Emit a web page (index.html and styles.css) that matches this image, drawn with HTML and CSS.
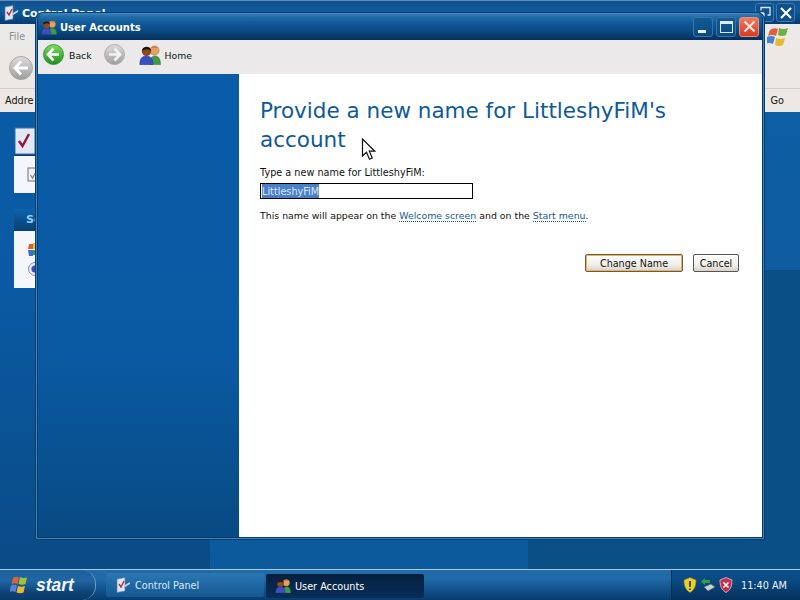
FILE: index.html
```html
<!DOCTYPE html>
<html lang="en">
<head>
<meta charset="utf-8">
<title>User Accounts</title>
<link rel="stylesheet" href="styles.css">
</head>
<body>
<svg class="defs" width="0" height="0" aria-hidden="true">
  <defs>
    <linearGradient id="gGreen" x1="0" y1="0" x2="0" y2="1"><stop offset="0" stop-color="#7fdc5a"/><stop offset="1" stop-color="#1c8f1c"/></linearGradient>
    <linearGradient id="gGrey" x1="0" y1="0" x2="0" y2="1"><stop offset="0" stop-color="#dcdcdc"/><stop offset="1" stop-color="#9e9e9e"/></linearGradient>
    <symbol id="users" viewBox="0 0 22 20">
      <path d="M11 19.500c0-5 1-8.500 5-8.500s5.500 3.500 5.500 8.500z" fill="#3f9a4a" stroke="#2c6e36" stroke-width=".5"/>
      <circle cx="15.500" cy="5.500" r="4.600" fill="#e8a060" stroke="#a06a3a" stroke-width=".5"/>
      <path d="M12 3q3.500-3.500 7 0z" fill="#c8824a"/>
      <path d="M.8 19.700c0-6 2.200-8.700 6.400-8.700s6.800 2.700 6.800 8.700z" fill="#3b4fc0" stroke="#26348a" stroke-width=".5"/>
      <circle cx="7.500" cy="6.500" r="4.600" fill="#8a4a24"/>
      <path d="M2.900 6.500a4.600 4.600 0 0 1 9.200-.5q-3-2.500-6-1.500t-3.200 2z" fill="#22130c"/>
    </symbol>
    <symbol id="cpanel" viewBox="0 0 16 16">
      <path d="M2 2l8-1.500V14l-8 1.500z" fill="#dfe8f4" stroke="#5a7fae" stroke-width=".7"/>
      <path d="M4 7l2 3 3-6" fill="none" stroke="#b03040" stroke-width="1.400"/>
      <path d="M10 8l5-3v2l-5 3z" fill="#cfd8e4"/>
    </symbol>
  </defs>
</svg>
<div class="screen">
  <main class="desktop">
    <section class="backwin">
      <header class="backtitle">
        <svg class="ico16"><use href="#cpanel"/></svg>
        <span class="backtitle-text">Control Panel</span>
        <span class="backbtns">
          <span class="backbtn"><svg width="14" height="14" viewBox="0 0 14 14"><path d="M3 4.500V1.500H12V9h-2.500M1 12L6 7M6 7H2.500M6 7v3.500" fill="none" stroke="#dceaf8" stroke-width="1.300"/></svg></span>
          <span class="backbtn"><svg width="12" height="12" viewBox="0 0 12 12"><path d="M1 1l10 10M11 1L1 11" stroke="#fff" stroke-width="2.200"/></svg></span>
        </span>
      </header>
      <nav class="backmenu">
        <span>File</span>
        <svg class="xplogo" width="24" height="22" viewBox="0 0 24 22"><path d="M3 5q4-3 8-1l-2 7q-4-2-8 0z" fill="#e0603a"/><path d="M12 3q4 2 9 0l-2 7q-4 2-8 0z" fill="#6fb040"/><path d="M0 12q4-2 8 0l-2 7q-4-2-8 0z" fill="#4a80d0"/><path d="M9 13q4 2 9 0l-2 7q-4 2-8 0z" fill="#e8b830"/></svg>
      </nav>
      <div class="backtools">
        <svg width="26" height="26" viewBox="0 0 26 26"><circle cx="13" cy="13" r="11.500" fill="url(#gGrey)" stroke="#a8a8a8"/><path d="M13 6.500L7 13l6 6.500M7.500 13H20" fill="none" stroke="#fff" stroke-width="2.800"/></svg>
      </div>
      <div class="backaddr"><span>Addre</span><span class="go">Go</span></div>
      <div class="backbody">
        <aside class="tasks">
          <div class="taskhead taskhead-first">
            <svg class="taskicon" width="22" height="28" viewBox="0 0 22 28"><rect x="1" y="1" width="20" height="26" fill="#dfe8f4" stroke="#3a6aa8"/><path d="M5 14l3.500 5L15 7" fill="none" stroke="#a01030" stroke-width="2.400"/></svg>
          </div>
          <div class="taskbox taskbox-a"><svg width="13" height="15" viewBox="0 0 13 15"><rect x="1" y="1" width="11" height="13" fill="#eef0f4" stroke="#6a7484"/><path d="M3.500 8l2 3 3.500-6" fill="none" stroke="#8a7a60" stroke-width="1.200"/></svg></div>
          <div class="taskhead taskhead-second"><span>Se</span></div>
          <div class="taskbox taskbox-b">
            <svg width="13" height="15" viewBox="0 0 13 15"><path d="M2 2h4v5H1z" fill="#e05a30"/><path d="M6 1h6v6H6z" fill="#e8c030"/><path d="M1 8h5v6H2z" fill="#3a70c8"/><path d="M6 8h6v5H6z" fill="#3aa040"/></svg>
            <svg width="13" height="15" viewBox="0 0 13 15"><circle cx="8" cy="8" r="6.500" fill="#e4e8f4" stroke="#8890b8"/><circle cx="8" cy="8" r="3.600" fill="#3a50b0"/></svg>
          </div>
        </aside>
      </div>
    </section>

    <section class="win">
      <header class="titlebar">
        <svg class="ico18"><use href="#users"/></svg>
        <h1 class="title">User Accounts</h1>
        <div class="capbtns">
          <span class="capbtn"><i class="glyph-min"></i></span>
          <span class="capbtn"><i class="glyph-max"></i></span>
          <span class="capbtn capbtn-close"><svg width="13" height="13" viewBox="0 0 13 13"><path d="M1.500 1.500l10 10M11.500 1.500l-10 10" stroke="#fbe6dd" stroke-width="2.200"/></svg></span>
        </div>
      </header>
      <div class="toolbar">
        <span class="tool">
          <svg width="21" height="21" viewBox="0 0 21 21"><circle cx="10.500" cy="10.500" r="10" fill="url(#gGreen)" stroke="#2d8a2d" stroke-width=".8"/><path d="M10.500 4.500L5 10.500l5.500 6M5.500 10.500H16" fill="none" stroke="#fff" stroke-width="2.600"/></svg>
          <span class="toollabel">Back</span>
        </span>
        <span class="tool tool-next">
          <svg width="21" height="21" viewBox="0 0 21 21"><circle cx="10.500" cy="10.500" r="10" fill="url(#gGrey)" stroke="#a4a4a4" stroke-width=".8"/><path d="M10.500 4.500L16 10.500l-5.500 6M15.500 10.500H5" fill="none" stroke="#f2f2f2" stroke-width="2.600"/></svg>
        </span>
        <span class="tool tool-home">
          <svg class="ico-home"><use href="#users"/></svg>
          <span class="toollabel">Home</span>
        </span>
      </div>
      <div class="panes">
        <aside class="side"></aside>
        <article class="content">
          <h2 class="heading">Provide a new name for LittleshyFiM's account</h2>
          <label class="fieldlabel" for="nm">Type a new name for LittleshyFiM:</label>
          <div class="field" id="nm"><span class="sel">LittleshyFiM</span></div>
          <p class="note">This name will appear on the <a class="lnk">Welcome screen</a> and on the <a class="lnk">Start menu</a>.</p>
          <div class="actions">
            <button class="btn btn-default" type="button">Change Name</button>
            <button class="btn btn-cancel" type="button">Cancel</button>
          </div>
        </article>
      </div>
    </section>

    <svg class="cursor" width="15" height="23" viewBox="0 0 15 23"><path d="M1.500 1v17l4-3.800 3 7 2.800-1.200-3-6.800h5.500z" fill="#fff" stroke="#111" stroke-width="1.200"/></svg>
  </main>

  <footer class="taskbar">
    <button class="start" type="button">
      <svg width="20" height="19" viewBox="0 0 20 19"><path d="M3 2q3-2 6-.5L7.500 8q-3-1.500-6 0z" fill="#e0603a"/><path d="M10 1q3 1.500 7 .5L15.500 8q-3 1.500-7 0z" fill="#9cc040"/><path d="M1 9.500q3-1.500 6 0L5.500 16q-3-1.500-6 0z" fill="#5a80d0"/><path d="M8 10q3 1.500 7 0L13.500 16.500q-3 1.500-7 0z" fill="#eab830"/></svg>
      <span>start</span>
    </button>
    <div class="tasklist">
      <span class="taskbtn"><svg class="ico16"><use href="#cpanel"/></svg>Control Panel</span>
      <span class="taskbtn taskbtn-active"><svg class="ico16"><use href="#users"/></svg>User Accounts</span>
    </div>
    <div class="tray">
      <svg width="14" height="16" viewBox="0 0 14 16"><path d="M7 .5l6 2.500c0 6-1.500 10-6 12.500C2.500 13 1 9 1 3z" fill="#e8cf30" stroke="#8a7a20" stroke-width=".6"/><path d="M7 4v6M7 11.500v1.500" stroke="#222" stroke-width="1.500"/></svg>
      <svg width="16" height="16" viewBox="0 0 16 16"><path d="M5 1l-4 3.500L5 8V6h5V3H5z" fill="#30a040"/><path d="M4 10l7-3 4 3-7 4z" fill="#c8d0d8" stroke="#55606a" stroke-width=".6"/></svg>
      <svg width="14" height="16" viewBox="0 0 14 16"><path d="M7 .5l6 2.500c0 6-1.500 10-6 12.500C2.500 13 1 9 1 3z" fill="#c03050" stroke="#e6c0c8" stroke-width=".8"/><path d="M4.500 5.500l5 5M9.500 5.500l-5 5" stroke="#fff" stroke-width="1.500"/></svg>
      <time class="clock">11:40 AM</time>
    </div>
  </footer>
</div>
</body>
</html>
```
FILE: styles.css
```css
* { box-sizing: border-box; }
html, body { margin: 0; padding: 0; }
body { font-family: "DejaVu Sans", Verdana, sans-serif; font-size: 9.700px; color: #111; }
.defs { position: absolute; }
.screen { width: 800px; height: 600px; display: flex; flex-direction: column; overflow: hidden; }
.ico16 { width: 16px; height: 16px; flex: none; }
.ico18 { width: 16px; height: 15px; flex: none; }

.desktop {
  position: relative; flex: 1; min-height: 0;
  background:
    linear-gradient(180deg, #0a5ba6 0 112px, #0a5aa3 288px, #0a4b86 100%) left / 210px 100% no-repeat,
    linear-gradient(90deg, #0c5a9b 0 528px, #0a4f85 528px 800px);
}

/* Control Panel behind */
.backwin { position: absolute; left: 0; top: 0; width: 800px; height: 270px; display: flex; flex-direction: column; }
.backtitle { height: 24px; flex: none; display: flex; align-items: center; gap: 3px; padding: 0 5px 0 3px; color: #fff; font-weight: bold; font-size: 11px;
  background: linear-gradient(180deg, #14508a 0, #0f5b9c 40%, #073d72 100%); border-top: 1px solid #5a8fc0; }
.backtitle-text { flex: 1; padding-top: 2px; }
.backbtns { display: flex; gap: 2px; }
.backbtn { width: 19px; height: 19px; display: flex; align-items: center; justify-content: center; border: 1px solid #3d78ae; border-radius: 3px; background: #0f4f8c; }
.backmenu { height: 24px; flex: none; display: flex; align-items: center; justify-content: space-between; padding: 0 9px; background: #ece9e9; color: #8d8d8d; }
.backtools { height: 40px; flex: none; display: flex; align-items: center; padding-left: 8px; background: #ece9e4; }
.backaddr { height: 24px; flex: none; display: flex; align-items: center; justify-content: space-between; padding: 0 16px 0 5px; background: #ece9e4; border-top: 1px solid #cfcdc6; }
.backbody { flex: 1; min-height: 0; padding: 15px 0 0 14px;
  background: linear-gradient(180deg, #0d5ea5, #0f5c9f) right / 100px 100% no-repeat; }
.tasks { display: flex; flex-direction: column; width: 30px; }
.taskhead { flex: none; height: 22px; background: linear-gradient(180deg, #0d63ad, #083f70); color: #8fd0f8; font-weight: bold; font-size: 11px; padding: 4px 0 0 12px; }
.taskhead-first { height: 29px; padding: 0; }
.taskhead-second { margin-top: 16px; }
.taskicon { display: block; }
.taskbox { flex: none; background: #f4f6fa; display: flex; flex-direction: column; padding-left: 13px; }
.taskbox-a { height: 37px; justify-content: center; }
.taskbox-b { height: 57px; padding-top: 11px; gap: 4px; }

/* User Accounts window */
.win { position: absolute; left: 36px; top: 13px; width: 728px; height: 526px; display: flex; flex-direction: column;
  border: 2px solid #083a68; border-top: 0; outline: 1px solid #3f85bd; outline-offset: -1px; border-radius: 7px 7px 0 0; background: #083a68; box-shadow: 0 0 0 1px #0a3c6a; }
.titlebar { height: 27px; flex: none; display: flex; align-items: center; padding: 1px 3px 0 3px; border-radius: 7px 7px 0 0;
  background: linear-gradient(180deg, #3c84bb 0, #1f6ba8 4px, #115a98 10px, #0b4c85 17px, #05305c 27px); }
.title { flex: 1; margin: 0 0 0 3px; color: #fff; font-size: 10px; font-weight: bold; }
.capbtns { display: flex; gap: 3px; margin-top: -1px; }
.capbtn { width: 20px; height: 20px; display: flex; align-items: center; justify-content: center; border: 1px solid #3a75a8; border-radius: 3px; background: linear-gradient(180deg, #125996, #0b4b85); }
.capbtn-close { background: linear-gradient(180deg, #ef7b5e, #d53a22); border-color: #e88e78; }
.glyph-min { width: 8px; height: 3px; background: #eef4fa; margin: 9px 0 0 -3px; }
.glyph-max { width: 13px; height: 12px; border: 1px solid #dfeaf5; border-top-width: 3px; }
.toolbar { height: 34px; flex: none; display: flex; align-items: center; background: #ece9ea; padding: 0 0 5px 5px; }
.tool { display: flex; align-items: center; gap: 5px; }
.toollabel { color: #111; font-size: 9.300px; padding-top: 1px; }
.tool-next { margin-left: 12px; }
.tool-home { margin-left: 14px; gap: 4px; }
.ico-home { width: 22px; height: 20px; }
.panes { flex: 1; min-height: 0; display: flex; }
.side { width: 201px; flex: none; background: linear-gradient(180deg, #0a5ba8 0, #0a5aa3 60%, #084a83 100%); }
.content { flex: 1; background: #fff; padding: 22px 23px 0 21px; }
.heading { margin: 0 0 11px; color: #0f5a96; font-size: 21.500px; font-weight: normal; line-height: 29px; width: 440px; }
.fieldlabel { display: block; color: #111; line-height: 14px; padding-top: 1px; height: 15px; }
.field { margin-top: 3px; width: 213px; height: 16px; border: 1px solid #000; padding: 0 1px; line-height: 14px; background: #fff; }
.sel { display: inline-block; background: #4a80c8; color: #dfe8f6; height: 14px; padding-top: 1px; }
.note { margin: 10px 0 0; line-height: 14px; color: #111; font-size: 9.400px; }
.lnk { color: #1a5a8c; border-bottom: 1px dotted #1a5a8c; }
.actions { margin-top: 31px; display: flex; justify-content: flex-end; gap: 10px; }
.btn { height: 18px; font: 9.600px "DejaVu Sans", Verdana, sans-serif; color: #111; padding: 0; border-radius: 2px; background: linear-gradient(180deg, #fff 0, #f1efe9 60%, #d5d2c8 100%); }
.btn-default { width: 98px; border: 1px solid #6d5a40; box-shadow: inset 0 0 0 1px #eeb25c; }
.btn-cancel { width: 46px; border: 1px solid #555; }
.cursor { position: absolute; left: 361px; top: 138px; }

/* Taskbar */
.taskbar { height: 31px; flex: none; display: flex; align-items: center; color: #fff; border-top: 1px solid #a8cce8;
  background: linear-gradient(180deg, #246aa6 0, #1f6aa8 30%, #104e88 70%, #083c6f 100%); }
.start { width: 96px; height: 100%; display: flex; align-items: center; gap: 6px; padding: 0 0 0 10px; border: 0; border-right: 1px solid #6a9cc6; border-radius: 0 14px 14px 0; color: #f2f6fa; font: italic bold 17.500px "Liberation Sans", Arial, sans-serif;
  background: linear-gradient(180deg, #1c5f9b 0, #2066a3 35%, #0e4376 75%, #0a3a68 100%); }
.tasklist { flex: 1; display: flex; gap: 2px; padding-left: 10px; }
.taskbtn { width: 158px; height: 24px; display: flex; align-items: center; gap: 4px; padding: 1px 0 0 9px; border-radius: 2px; font-size: 9.700px; color: #dbe9f6; background: linear-gradient(180deg, #2a77b4, #145893); }
.taskbtn-active { color: #fff; background: linear-gradient(180deg, #04203f, #0a2e57); margin-top: 1px; }
.tray { width: 129px; height: 100%; flex: none; display: flex; align-items: center; gap: 3px; padding-left: 11px; border-left: 1px solid #062e58; background: linear-gradient(180deg, #0c4f8c 0, #0a4a82 35%, #05305c 100%); }
.clock { margin-left: 5px; font-size: 9.700px; color: #eaf4fc; white-space: nowrap; }
```
